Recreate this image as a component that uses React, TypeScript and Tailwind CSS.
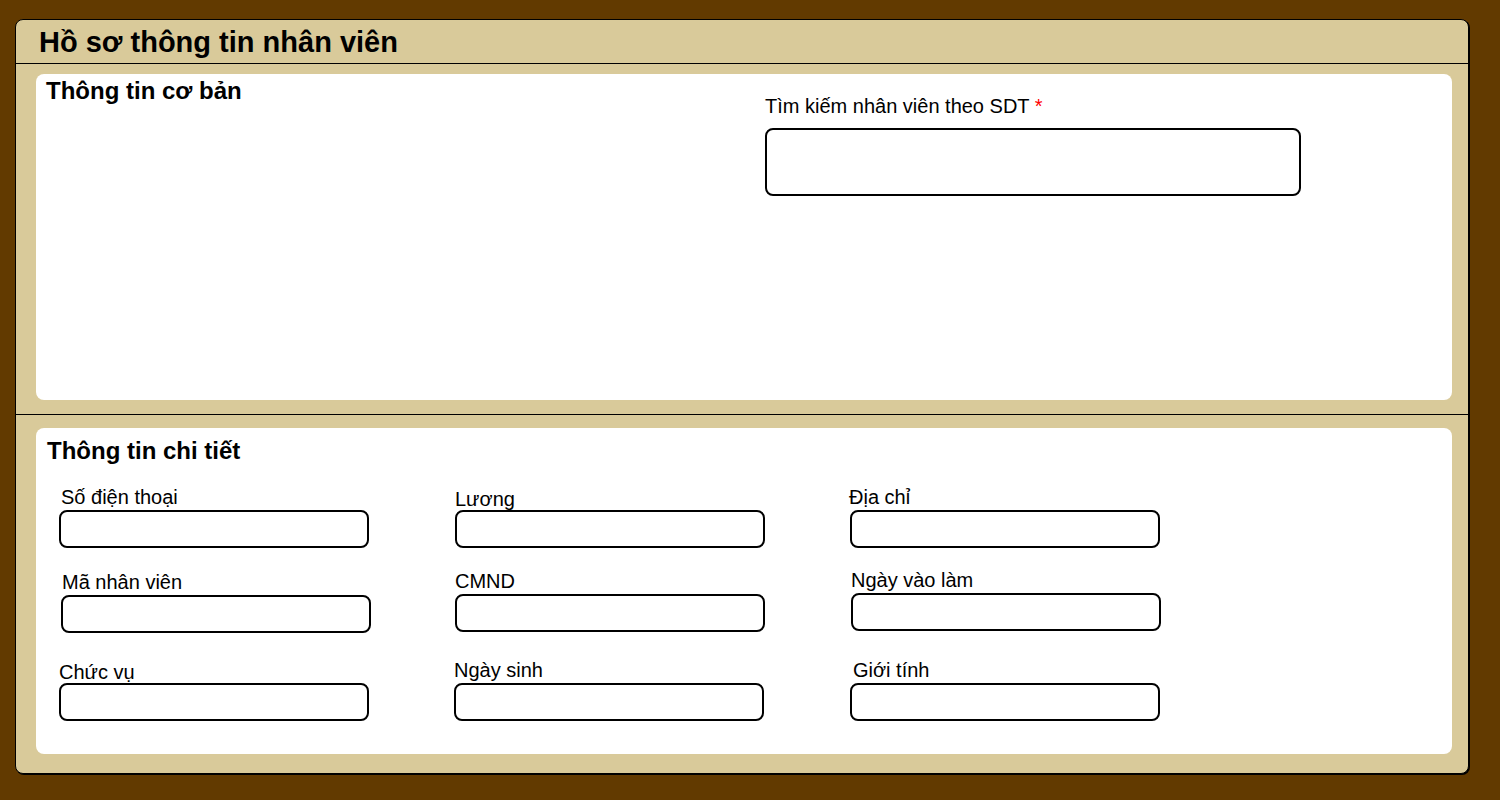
import React from 'react';

type FieldProps = {
    label: string;
    shift?: string;
    labelCls?: string;
};

function Field({ label, shift = '', labelCls = 'mb-[2px]' }: FieldProps) {
    return (
        <div className={`flex flex-col ${shift}`}>
            <label className={`text-[20px] leading-[22px] ${labelCls}`}>{label}</label>
            <input className="h-[38px] w-[310px] border-2 border-black rounded-lg bg-white outline-none px-2" />
        </div>
    );
}

export default function App() {
    return (
        <div className="bg-[#623a00] min-h-screen w-full pt-[19px] px-[15px] pb-[26px] font-['Liberation_Sans',Arial,sans-serif] text-black">
            {/* Main panel */}
            <div className="w-[1454px] h-[755px] bg-[#d9ca9a] border border-black rounded-lg shadow-[1px_1px_0_#000] flex flex-col">
                <div className="h-[44px] border-b border-black pl-[23px] flex items-center">
                    <h1 className="text-[29px] font-bold leading-[34px]">Hồ sơ thông tin nhân viên</h1>
                </div>

                {/* Thông tin cơ bản */}
                <div className="pl-[20px] pr-[16px] pt-[10px] pb-[14px] border-b border-black">
                    <div className="bg-white rounded-lg h-[326px] flex">
                        <div className="w-[729px] pl-[10px] pt-[3px]">
                            <h2 className="text-[24px] font-bold leading-[28px]">Thông tin cơ bản</h2>
                        </div>
                        <div className="pt-[20px] flex flex-col">
                            <label className="text-[20px] leading-[24px] mb-[10px]">
                                Tìm kiếm nhân viên theo SDT <span className="text-[#ff0000]">*</span>
                            </label>
                            <input className="h-[68px] w-[536px] border-2 border-black rounded-lg outline-none px-3" />
                        </div>
                    </div>
                </div>

                {/* Thông tin chi tiết */}
                <div className="pl-[20px] pr-[16px] pt-[13px]">
                    <div className="bg-white rounded-lg h-[326px] pl-[23px] pt-[9px]">
                        <h2 className="text-[24px] font-bold leading-[28px] -ml-[12px]">Thông tin chi tiết</h2>
                        <div className="mt-[21px] grid grid-cols-[310px_310px_310px] gap-x-[86px]">
                            <Field label="Số điện thoại" labelCls="mb-[2px] ml-[2px]" />
                            <Field label="Lương" labelCls="mt-[2px]" />
                            <Field label="Địa chỉ" labelCls="mb-[2px] -ml-[1px]" shift="-ml-[1px]" />
                        </div>
                        <div className="mt-[23px] grid grid-cols-[310px_310px_310px] gap-x-[86px]">
                            <Field label="Mã nhân viên" shift="ml-[2px]" labelCls="mb-[2px] ml-[1px]" />
                            <Field label="CMND" shift="-mt-[1px]" />
                            <Field label="Ngày vào làm" shift="-mt-[2px]" />
                        </div>
                        <div className="mt-[26px] grid grid-cols-[310px_310px_310px] gap-x-[86px]">
                            <Field label="Chức vụ" labelCls="mt-[2px]" />
                            <Field label="Ngày sinh" shift="-ml-[1px]" />
                            <Field label="Giới tính" shift="-ml-[1px]" labelCls="mb-[2px] ml-[3px]" />
                        </div>
                    </div>
                </div>
            </div>
        </div>
    );
}
